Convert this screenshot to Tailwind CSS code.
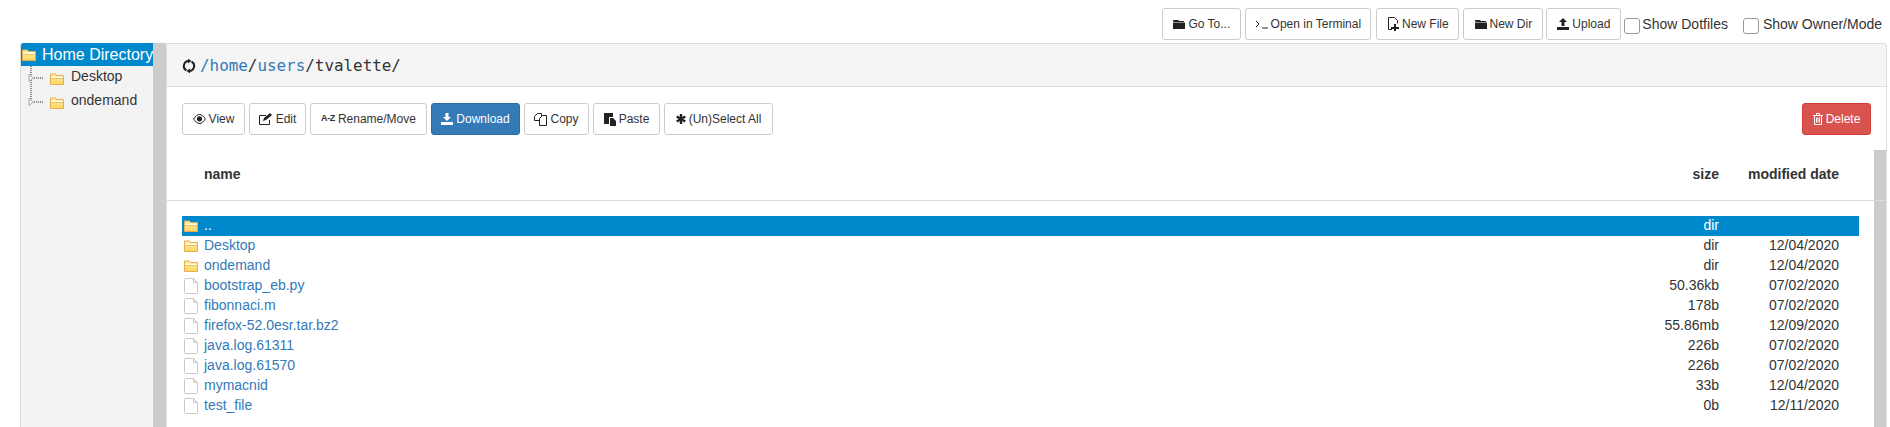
<!DOCTYPE html>
<html>
<head>
<meta charset="utf-8">
<script src="https://cdn.jsdelivr.net/npm/@tailwindcss/browser@4"></script>
</head>
<body class="bg-white text-[#333] font-['Liberation_Sans',Arial,sans-serif] text-[14px] overflow-hidden">
<svg width="0" height="0" class="absolute">
  <defs>
    <linearGradient id="yg" x1="0" y1="0" x2="0" y2="1"><stop offset="0" stop-color="#fdeda6"/><stop offset="1" stop-color="#f9d765"/></linearGradient>
    <symbol id="yf" viewBox="0 0 14 12">
      <path d="M.5 11.500V1h5l1 1.500h7v9z" fill="url(#yg)" stroke="#e8ad4a"/>
      <path d="M1 3.500h12v2H1z" fill="#fffbe6"/>
      <path d="M1 5.500h12" stroke="#e9c566"/>
    </symbol>
    <symbol id="doc" viewBox="0 0 14 16">
      <path d="M1.500.5h8l4 4v10a1 1 0 0 1-1 1h-11a1 1 0 0 1-1-1v-13a1 1 0 0 1 1-1z" fill="#fff" stroke="#c8c8c8"/>
      <path d="M9.500.5v4h4z" fill="#efefef" stroke="#c8c8c8"/>
    </symbol>
    <symbol id="conn" viewBox="0 0 19 24">
      <path d="M5 0v24" stroke="#222" stroke-dasharray="1 1" fill="none"/>
      <path d="M8 12h10" stroke="#222" stroke-dasharray="1 1" fill="none"/>
      <path d="M3 8.500l4.500 3.500-4.500 3.500z" fill="#f3f3f3" stroke="#aaa"/>
    </symbol>
    <symbol id="connlast" viewBox="0 0 19 24">
      <path d="M5 0v12" stroke="#222" stroke-dasharray="1 1" fill="none"/>
      <path d="M8 12h10" stroke="#222" stroke-dasharray="1 1" fill="none"/>
      <path d="M3 8.500l4.500 3.500-4.500 3.500z" fill="#f3f3f3" stroke="#aaa"/>
    </symbol>
    <symbol id="fold" viewBox="0 0 12 12">
      <path d="M0 3V2h5l1 1h5v1H1zM0 4.500h12V11H0z" fill="#222"/>
    </symbol>
  </defs>
</svg>

<div class="h-[43px] flex items-start justify-end pt-[8px] pr-[8px]">
  <button class="h-[32px] w-[79px] mr-[4px] border border-[#ccc] rounded-[3px] bg-white text-[12px] flex items-center justify-center gap-[3px]"><svg class="w-[12px] h-[12px]"><use href="#fold"/></svg>Go To...</button>
  <button class="h-[32px] w-[126px] mr-[5px] border border-[#ccc] rounded-[3px] bg-white text-[12px] flex items-center justify-center gap-[3px]"><svg width="12" height="12" viewBox="0 0 12 12" fill="none" stroke="#222"><path d="M0 3l3 3-3 3M6 10h6"/></svg>Open in Terminal</button>
  <button class="h-[32px] w-[83px] mr-[4px] border border-[#ccc] rounded-[3px] bg-white text-[12px] flex items-center justify-center gap-[3px]"><svg width="12" height="14" viewBox="0 0 12 14"><path d="M1.500.5h6l3 3v3M5 12.500H1.500v-12" fill="none" stroke="#222"/><path d="M7 7h2v3h3v2H9v2H7v-2H4v-2h3z" fill="#222"/></svg>New File</button>
  <button class="h-[32px] w-[80px] mr-[3px] border border-[#ccc] rounded-[3px] bg-white text-[12px] flex items-center justify-center gap-[3px]"><svg class="w-[12px] h-[12px]"><use href="#fold"/></svg>New Dir</button>
  <button class="h-[32px] w-[75px] mr-[3px] border border-[#ccc] rounded-[3px] bg-white text-[12px] flex items-center justify-center gap-[3px]"><svg width="12" height="12" viewBox="0 0 12 12" fill="#222"><path d="M6 0l4 4H7.500v4h-3V4H2z"/><path d="M0 9h12v3H0z"/></svg>Upload</button>
  <label class="flex items-start h-[32px]"><input type="checkbox" class="appearance-none w-[16px] h-[16px] mt-[10px] border border-[#999] rounded-[3px] bg-white"><span class="ml-[2px] mt-[6px] leading-[20px]">Show Dotfiles</span></label>
  <label class="flex items-start h-[32px] ml-[15px]"><input type="checkbox" class="appearance-none w-[16px] h-[16px] mt-[10px] border border-[#999] rounded-[3px] bg-white"><span class="ml-[4px] mt-[6px] leading-[20px]">Show Owner/Mode</span></label>
</div>

<div class="flex pl-[20px] pr-[3px] h-[384px]">
  <aside class="w-[133px] shrink-0 bg-[#f3f3f3] border-l border-[#ddd] rounded-tl-[3px] overflow-hidden">
    <div class="h-[23px] bg-[#0088cc] text-white text-[16px] flex items-center pl-[1px] whitespace-nowrap leading-[23px]"><svg class="w-[14px] h-[12px] mr-[6px] shrink-0"><use href="#yf"/></svg>Home Directory</div>
    <div class="h-[24px] flex items-center text-[14px] whitespace-nowrap pl-[5px]"><svg class="w-[19px] h-[24px] shrink-0"><use href="#conn"/></svg><svg class="w-[14px] h-[12px] ml-[5px] mt-[1px]"><use href="#yf"/></svg><span class="ml-[7px] -mt-[3px]">Desktop</span></div>
    <div class="h-[24px] flex items-center text-[14px] whitespace-nowrap pl-[5px]"><svg class="w-[19px] h-[24px] shrink-0"><use href="#connlast"/></svg><svg class="w-[14px] h-[12px] ml-[5px] mt-[1px]"><use href="#yf"/></svg><span class="ml-[7px] -mt-[3px]">ondemand</span></div>
  </aside>
  <div class="w-[13px] shrink-0 bg-[#ccc]"></div>

  <main class="flex-1 min-w-0 border-l border-r border-t border-[#ddd] rounded-tr-[3px] bg-white">
    <div class="h-[43px] bg-[#f5f5f5] border-b border-[#ddd] pl-[15px] flex items-center">
      <svg width="14" height="14" viewBox="0 0 14 14" class="mr-[4px] mt-[1px]"><path d="M7 2A5 5 0 0 0 4.500 11.400" fill="none" stroke="#222" stroke-width="2"/><path d="M7 12A5 5 0 0 0 9.500 2.600" fill="none" stroke="#222" stroke-width="2"/><path d="M6 -.5l3.500 2.500-3.500 2.500zM8 14.500l-3.500-2.500 3.500-2.500z" fill="#222"/></svg>
      <span class="font-['DejaVu_Sans_Mono',monospace] text-[15.9px] mt-[2px]"><span class="text-[#337ab7]">/home</span>/<span class="text-[#337ab7]">users</span>/tvalette/</span>
    </div>
    <div class="h-[63px] pt-[16px] pl-[15px] pr-[15px] flex items-start gap-[4px]">
      <button class="h-[32px] w-[63px] border border-[#ccc] rounded-[3px] bg-white text-[12px] flex items-center justify-center gap-[3px]"><svg width="13" height="10" viewBox="0 0 13 10"><path d="M.6 5c1.800-2.600 3.600-4.500 5.900-4.500S10.600 2.400 12.400 5c-1.800 2.600-3.600 4.500-5.900 4.500S2.400 7.600.6 5z" fill="#fff" stroke="#222"/><circle cx="6.500" cy="4.800" r="2.600" fill="#222"/></svg>View</button>
      <button class="h-[32px] w-[57px] border border-[#ccc] rounded-[3px] bg-white text-[12px] flex items-center justify-center gap-[4px]"><svg width="13" height="12" viewBox="0 0 13 12" fill="none" stroke="#222"><path d="M10.500 7v4.500h-10v-9H7"/><path d="M4 8l1-3 6-5 2 2-6 5z" fill="#222" stroke="none"/></svg>Edit</button>
      <button class="h-[32px] w-[117px] border border-[#ccc] rounded-[3px] bg-white text-[12px] flex items-center justify-center gap-[3px]"><span class="text-[9px] font-bold tracking-[-0.4px]">A-Z</span>Rename/Move</button>
      <button class="h-[32px] w-[89px] border border-[#2e6da4] rounded-[3px] bg-[#337ab7] text-white text-[12px] flex items-center justify-center gap-[3px]"><svg width="12" height="12" viewBox="0 0 12 12" fill="#fff"><path d="M4.500 0h3v4H10L6 8 2 4h2.500z"/><path d="M0 9h12v3H0z"/></svg>Download</button>
      <button class="h-[32px] w-[65px] border border-[#ccc] rounded-[3px] bg-white text-[12px] flex items-center justify-center gap-[3px]"><svg width="13" height="13" viewBox="0 0 13 13" fill="#fff" stroke="#222"><path d="M.5 3.500l3-3h4v7h-7z"/><path d="M5.500 5.500l3-3h4v10h-7z"/></svg>Copy</button>
      <button class="h-[32px] w-[67px] border border-[#ccc] rounded-[3px] bg-white text-[12px] flex items-center justify-center gap-[3px]"><svg width="12" height="13" viewBox="0 0 12 13"><path d="M0 0h9v4H5v7H0z" fill="#222"/><path d="M6 5h3l3 3v5H6z" fill="#222"/></svg>Paste</button>
      <button class="h-[32px] w-[109px] border border-[#ccc] rounded-[3px] bg-white text-[12px] flex items-center justify-center gap-[3px]"><svg width="10" height="10" viewBox="0 0 10 10" stroke="#222" stroke-width="2.400"><path d="M5 0v10M.7 2.500l8.600 5M.7 7.500l8.600-5"/></svg>(Un)Select All</button>
      <button class="h-[32px] w-[69px] ml-auto border border-[#d43f3a] rounded-[3px] bg-[#d9534f] text-white text-[12px] flex items-center justify-center gap-[3px]"><svg width="10" height="12" viewBox="0 0 10 12" fill="none" stroke="#fff"><path d="M0 2.500h10M3.500 2.500V.5h3v2M1.500 2.500v9h7v-9M3.500 4.500v5M5 4.500v5M6.500 4.500v5"/></svg>Delete</button>
    </div>

    <div class="flex">
      <div class="flex-1 min-w-0">
        <div class="h-[51px] pl-[37px] pr-[35px] border-b border-[#ddd] flex items-center font-bold">
          <span class="flex-1 -mt-[2px]">name</span>
          <span class="w-[100px] text-right -mt-[2px]">size</span>
          <span class="w-[120px] text-right -mt-[2px]">modified date</span>
        </div>
        <div class="pt-[15px] pl-[15px] pr-[15px] leading-[20px]">
          <div class="h-[20px] bg-[#0088cc] text-white flex items-center pr-[20px] [&>span]:-mt-[2px]"><svg class="w-[14px] h-[12px] ml-[2px] mr-[6px] shrink-0"><use href="#yf"/></svg><span class="flex-1">..</span><span class="w-[100px] text-right">dir</span><span class="w-[120px] text-right"></span></div>
          <div class="h-[20px] flex items-center pr-[20px] [&>span]:-mt-[2px]"><svg class="w-[14px] h-[12px] ml-[2px] mr-[6px] shrink-0"><use href="#yf"/></svg><span class="flex-1 text-[#337ab7]">Desktop</span><span class="w-[100px] text-right">dir</span><span class="w-[120px] text-right">12/04/2020</span></div>
          <div class="h-[20px] flex items-center pr-[20px] [&>span]:-mt-[2px]"><svg class="w-[14px] h-[12px] ml-[2px] mr-[6px] shrink-0"><use href="#yf"/></svg><span class="flex-1 text-[#337ab7]">ondemand</span><span class="w-[100px] text-right">dir</span><span class="w-[120px] text-right">12/04/2020</span></div>
          <div class="h-[20px] flex items-center pr-[20px] [&>span]:-mt-[2px]"><svg class="w-[14px] h-[16px] ml-[2px] mr-[6px] shrink-0"><use href="#doc"/></svg><span class="flex-1 text-[#337ab7]">bootstrap_eb.py</span><span class="w-[100px] text-right">50.36kb</span><span class="w-[120px] text-right">07/02/2020</span></div>
          <div class="h-[20px] flex items-center pr-[20px] [&>span]:-mt-[2px]"><svg class="w-[14px] h-[16px] ml-[2px] mr-[6px] shrink-0"><use href="#doc"/></svg><span class="flex-1 text-[#337ab7]">fibonnaci.m</span><span class="w-[100px] text-right">178b</span><span class="w-[120px] text-right">07/02/2020</span></div>
          <div class="h-[20px] flex items-center pr-[20px] [&>span]:-mt-[2px]"><svg class="w-[14px] h-[16px] ml-[2px] mr-[6px] shrink-0"><use href="#doc"/></svg><span class="flex-1 text-[#337ab7]">firefox-52.0esr.tar.bz2</span><span class="w-[100px] text-right">55.86mb</span><span class="w-[120px] text-right">12/09/2020</span></div>
          <div class="h-[20px] flex items-center pr-[20px] [&>span]:-mt-[2px]"><svg class="w-[14px] h-[16px] ml-[2px] mr-[6px] shrink-0"><use href="#doc"/></svg><span class="flex-1 text-[#337ab7]">java.log.61311</span><span class="w-[100px] text-right">226b</span><span class="w-[120px] text-right">07/02/2020</span></div>
          <div class="h-[20px] flex items-center pr-[20px] [&>span]:-mt-[2px]"><svg class="w-[14px] h-[16px] ml-[2px] mr-[6px] shrink-0"><use href="#doc"/></svg><span class="flex-1 text-[#337ab7]">java.log.61570</span><span class="w-[100px] text-right">226b</span><span class="w-[120px] text-right">07/02/2020</span></div>
          <div class="h-[20px] flex items-center pr-[20px] [&>span]:-mt-[2px]"><svg class="w-[14px] h-[16px] ml-[2px] mr-[6px] shrink-0"><use href="#doc"/></svg><span class="flex-1 text-[#337ab7]">mymacnid</span><span class="w-[100px] text-right">33b</span><span class="w-[120px] text-right">12/04/2020</span></div>
          <div class="h-[20px] flex items-center pr-[20px] [&>span]:-mt-[2px]"><svg class="w-[14px] h-[16px] ml-[2px] mr-[6px] shrink-0"><use href="#doc"/></svg><span class="flex-1 text-[#337ab7]">test_file</span><span class="w-[100px] text-right">0b</span><span class="w-[120px] text-right">12/11/2020</span></div>
        </div>
      </div>
      <div class="w-[12px] shrink-0 flex flex-col h-[277px]">
        <div class="h-[50px] bg-[#ccc]"></div>
        <div class="h-[1px] bg-[#ddd]"></div>
        <div class="flex-1 bg-[#ccc]"></div>
      </div>
    </div>
  </main>
</div>
</body>
</html>
